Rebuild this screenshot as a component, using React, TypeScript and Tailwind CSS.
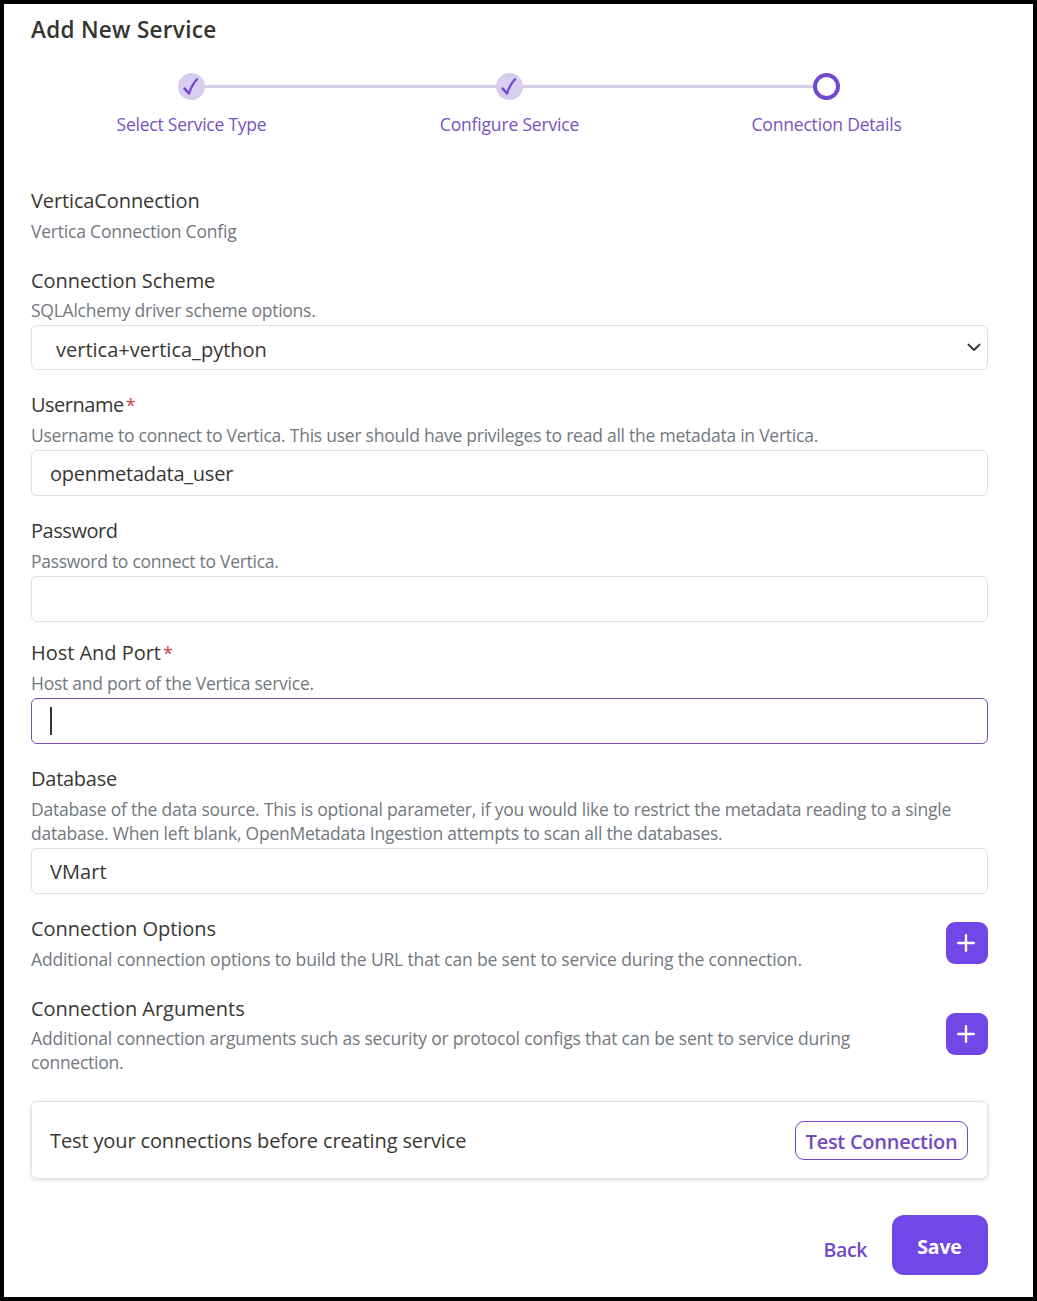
import React from "react";

function Label({ text, className = "", required = false }: { text: string; className?: string; required?: boolean }) {
  return (
    <div className="flex h-[38px] items-center pt-[2px] whitespace-nowrap text-[20px] text-[#393733]">
      <span className={className}>{text}</span>
      {required && <span className="ml-[2px] text-[18px] text-[#cb4444]">*</span>}
    </div>
  );
}

function Hint({ children, className = "" }: { children: React.ReactNode; className?: string }) {
  return <div className={`whitespace-nowrap text-[17.5px] leading-[24px] text-[#727880] ${className}`}>{children}</div>;
}

function Field({ value, className = "" }: { value: string; className?: string }) {
  return (
    <input
      className={`mt-[3px] block h-[46px] w-full rounded-md border border-[#dce1e6] bg-white px-[18px] pt-[1px] text-[20px] text-[#393733] outline-none ${className}`}
      defaultValue={value}
    />
  );
}

function StepDone() {
  return (
    <div className="flex size-[27px] items-center justify-center rounded-full bg-[#d7cdee]">
      <svg width="27" height="27" viewBox="0 0 27 27" fill="none" stroke="#7147d0" strokeLinecap="round" strokeLinejoin="round">
        <path d="M6.6 15.6L11 20.3" strokeWidth="2.6" />
        <path d="M11 20.3C12.8 15 15.6 9.8 19 6.2" strokeWidth="2.2" />
      </svg>
    </div>
  );
}

function StepLabel({ text, className }: { text: string; className: string }) {
  return (
    <div className="flex w-[318px] justify-center whitespace-nowrap text-[17.5px] leading-6 text-[#7653bd]">
      <span className={className}>{text}</span>
    </div>
  );
}

function AddButton() {
  return (
    <button className="flex size-[42px] shrink-0 items-center justify-center rounded-[9px] bg-[#7147e8]">
      <svg width="18" height="18" viewBox="0 0 18 18" stroke="#fff" strokeWidth="2.4" strokeLinecap="round" className="-ml-[2px]">
        <path d="M9 1.2V16.8M1.2 9H16.8" />
      </svg>
    </button>
  );
}

export default function App() {
  return (
    <main className="h-[1301px] w-[1037px] overflow-hidden border-4 border-black bg-white pr-[45px] pl-[27px] font-['Open_Sans','Noto_Sans',sans-serif]">
      <h1 className="flex h-[50px] items-center pt-px text-[22.5px] font-semibold tracking-[0.3px] text-[#353430]">Add New Service</h1>

      <section className="flex h-[127px] flex-col items-center pt-[19px]">
        <div className="flex items-center pr-[2px]">
          <StepDone />
          <div className="h-[3px] w-[291px] bg-[#d7cfe7]" />
          <StepDone />
          <div className="h-[3px] w-[290px] bg-[#d7cfe7]" />
          <div className="size-[27px] rounded-full border-4 border-[#7149cf]" />
        </div>
        <div className="mt-[12px] flex">
          <StepLabel text="Select Service Type" className="tracking-[-0.23px]" />
          <StepLabel text="Configure Service" className="tracking-[-0.17px]" />
          <StepLabel text="Connection Details" className="-ml-[2px] tracking-[-0.18px]" />
        </div>
      </section>

      <section className="mb-[18px]">
        <Label text="VerticaConnection" className="tracking-[-0.12px]" />
        <Hint className="tracking-[-0.2px]">Vertica Connection Config</Hint>
      </section>

      <section className="mb-[15px]">
        <Label text="Connection Scheme" className="tracking-[-0.07px]" />
        <Hint className="-mt-px tracking-[-0.25px]">SQLAlchemy driver scheme options.</Hint>
        <div className="mt-[3px] flex h-[45px] items-center justify-between rounded-md border border-[#dce1e6] pr-[6px] pl-[24px] text-[20px] text-[#393733]">
          <span className="pt-[5px] tracking-[0.01px]">vertica+vertica_python</span>
          <svg width="14" height="9" viewBox="0 0 15 9" fill="none" stroke="#333" strokeWidth="2.1" strokeLinecap="round" strokeLinejoin="round">
            <path d="M1.6 1.4L7.5 7.2L13.4 1.4" />
          </svg>
        </div>
      </section>

      <section className="mb-[15px]">
        <Label text="Username" className="tracking-[-0.5px]" required />
        <Hint className="tracking-[-0.24px]">
          Username to connect to Vertica. This user should have privileges to read all the metadata in Vertica.
        </Hint>
        <Field value="openmetadata_user" className="tracking-[-0.25px]" />
      </section>

      <section className="mb-[11px]">
        <Label text="Password" className="tracking-[-0.45px]" />
        <Hint className="tracking-[-0.28px]">Password to connect to Vertica.</Hint>
        <Field value="" />
      </section>

      <section className="mb-[15px]">
        <Label text="Host And Port" className="tracking-[-0.03px]" required />
        <Hint className="tracking-[-0.24px]">Host and port of the Vertica service.</Hint>
        <div className="mt-[3px] flex h-[46px] items-center rounded-md border border-[#7650a8] px-[18px]">
          <div className="h-[28px] w-[2px] bg-[#333]" />
        </div>
      </section>

      <section className="mb-[15px]">
        <Label text="Database" className="tracking-[-0.25px]" />
        <Hint className="tracking-[-0.208px]">
          Database of the data source. This is optional parameter, if you would like to restrict the metadata reading to a single
        </Hint>
        <Hint className="tracking-[-0.235px]">database. When left blank, OpenMetadata Ingestion attempts to scan all the databases.</Hint>
        <Field value="VMart" className="tracking-[0.1px]" />
      </section>

      <section className="mb-[18px] flex items-start justify-between">
        <div>
          <Label text="Connection Options" className="-tracking-[0.02px]" />
          <Hint className="tracking-[-0.16px]">
            Additional connection options to build the URL that can be sent to service during the connection.
          </Hint>
        </div>
        <div className="pt-[13px]">
          <AddButton />
        </div>
      </section>

      <section className="mb-[27px] flex items-start justify-between">
        <div>
          <Label text="Connection Arguments" className="tracking-[-0.03px]" />
          <Hint className="-mt-px tracking-[-0.186px]">
            Additional connection arguments such as security or protocol configs that can be sent to service during
          </Hint>
          <Hint className="tracking-[-0.25px]">connection.</Hint>
        </div>
        <div className="pt-[24px]">
          <AddButton />
        </div>
      </section>

      <section className="flex h-[78px] items-center justify-between rounded-md border border-[#dfe2e8] pr-[19px] pl-[18px] shadow-[0_1px_4px_rgba(0,0,0,0.14)]">
        <span className="pt-[2px] text-[20px] tracking-[-0.13px] text-[#393733]">Test your connections before creating service</span>
        <button className="flex h-[39px] w-[173px] items-center justify-center rounded-[9px] border border-[#7147c0] pt-[3px] text-[20px] font-semibold tracking-[-0.27px] whitespace-nowrap text-[#714cc4]">
          Test Connection
        </button>
      </section>

      <section className="mt-[36px] flex h-[60px] items-center justify-end">
        <button className="mr-[25px] pt-[9px] text-[19.5px] font-semibold tracking-[-0.4px] text-[#714cc4]">Back</button>
        <button className="flex h-[60px] w-[96px] items-center justify-center rounded-xl bg-[#7147e8] pt-[3px] pr-px text-[19.5px] font-bold tracking-[-0.2px] text-white">
          Save
        </button>
      </section>
    </main>
  );
}
